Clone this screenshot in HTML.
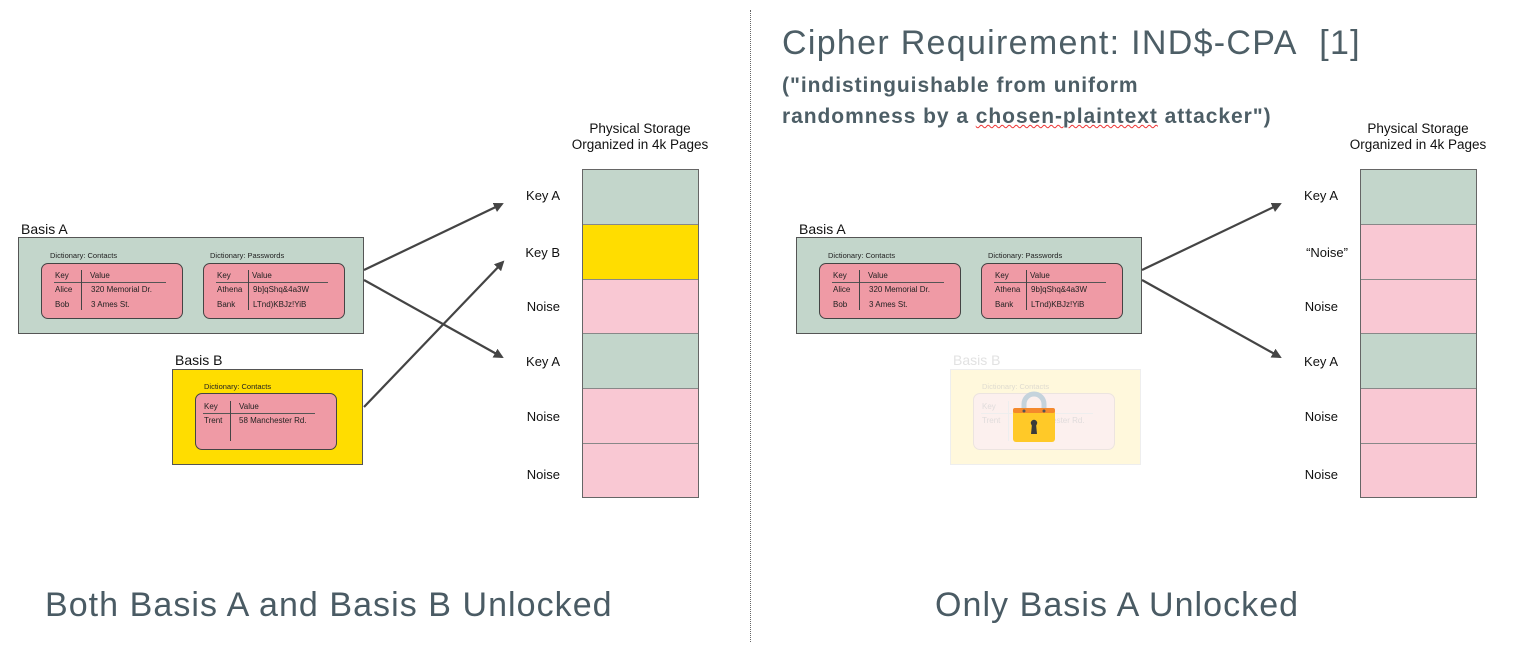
<!DOCTYPE html>
<html><head><meta charset="utf-8"><style>
body{margin:0;width:1515px;height:646px;background:#fff;position:relative;overflow:hidden;font-family:"Liberation Sans",sans-serif;}
.a{position:absolute;white-space:nowrap;}
.lbl{font-size:14px;color:#111;}
.basis{position:absolute;border:1px solid #555;box-sizing:border-box;}
.dl{position:absolute;font-size:7.5px;color:#222;white-space:nowrap;}
.ib{position:absolute;background:#ef9aa5;border:1px solid #444;border-radius:7px;box-sizing:border-box;font-size:8px;color:#222;}
.ib span{position:absolute;white-space:nowrap;}
.hl{position:absolute;height:1px;background:#555;}
.vl{position:absolute;width:1px;background:#444;}
.cell{position:absolute;left:0;width:100%;border-bottom:1px solid #888;box-sizing:border-box;}
.sl{position:absolute;font-size:13px;color:#111;text-align:right;width:80px;}
.big{position:absolute;font-size:34px;color:#4a5b64;white-space:nowrap;letter-spacing:1.05px;}
</style></head><body>

<div class="a" style="left:750px;top:10px;height:632px;border-left:1.5px dotted #666;"></div>

<!-- LEFT -->
<div class="a lbl" style="left:21px;top:221px;">Basis A</div>
<div class="basis" style="left:18px;top:237px;width:346px;height:97px;background:#c3d6cb;"></div>
<div class="dl" style="left:50px;top:251px;">Dictionary: Contacts</div>
<div class="dl" style="left:210px;top:251px;">Dictionary: Passwords</div>
<div class="ib" style="left:41px;top:263px;width:142px;height:56px;">
 <span style="left:13px;top:7px;">Key</span><span style="left:48px;top:7px;">Value</span>
 <div class="hl" style="left:12px;top:18px;width:112px;"></div><div class="vl" style="left:39px;top:6px;height:40px;"></div>
 <span style="left:13px;top:21px;">Alice</span><span style="left:49px;top:21px;">320 Memorial Dr.</span>
 <span style="left:13px;top:36px;">Bob</span><span style="left:49px;top:36px;">3 Ames St.</span>
</div>
<div class="ib" style="left:203px;top:263px;width:142px;height:56px;">
 <span style="left:13px;top:7px;">Key</span><span style="left:48px;top:7px;">Value</span>
 <div class="hl" style="left:12px;top:18px;width:112px;"></div><div class="vl" style="left:44px;top:6px;height:40px;"></div>
 <span style="left:13px;top:21px;">Athena</span><span style="left:49px;top:21px;">9b]qShq&amp;4a3W</span>
 <span style="left:13px;top:36px;">Bank</span><span style="left:49px;top:36px;">LTnd)KBJz!YiB</span>
</div>
<div class="a lbl" style="left:175px;top:352px;">Basis B</div>
<div class="basis" style="left:172px;top:369px;width:191px;height:96px;background:#ffdd00;"></div>
<div class="dl" style="left:204px;top:382px;">Dictionary: Contacts</div>
<div class="ib" style="left:195px;top:393px;width:142px;height:57px;">
 <span style="left:8px;top:8px;">Key</span><span style="left:43px;top:8px;">Value</span>
 <div class="hl" style="left:7px;top:19px;width:112px;"></div><div class="vl" style="left:34px;top:7px;height:40px;"></div>
 <span style="left:8px;top:22px;">Trent</span><span style="left:43px;top:22px;">58 Manchester Rd.</span>
</div>

<div class="a" style="left:540px;top:121px;width:200px;text-align:center;font-size:13.5px;line-height:16px;color:#111;">Physical Storage<br>Organized in 4k Pages</div>
<div class="a" style="left:582px;top:169px;width:117px;height:329px;border:1px solid #666;box-sizing:border-box;">
 <div class="cell" style="top:0;height:55px;background:#c3d6cb;"></div>
 <div class="cell" style="top:55px;height:55px;background:#ffdd00;"></div>
 <div class="cell" style="top:110px;height:54px;background:#f9c8d3;"></div>
 <div class="cell" style="top:164px;height:55px;background:#c3d6cb;"></div>
 <div class="cell" style="top:219px;height:55px;background:#f9c8d3;"></div>
 <div class="cell" style="top:274px;height:53px;background:#f9c8d3;border:none;"></div>
</div>
<div class="sl" style="left:480px;top:188px;">Key A</div>
<div class="sl" style="left:480px;top:245px;">Key B</div>
<div class="sl" style="left:480px;top:299px;">Noise</div>
<div class="sl" style="left:480px;top:354px;">Key A</div>
<div class="sl" style="left:480px;top:409px;">Noise</div>
<div class="sl" style="left:480px;top:467px;">Noise</div>

<!-- RIGHT -->
<div class="a lbl" style="left:799px;top:221px;">Basis A</div>
<div class="basis" style="left:796px;top:237px;width:346px;height:97px;background:#c3d6cb;"></div>
<div class="dl" style="left:828px;top:251px;">Dictionary: Contacts</div>
<div class="dl" style="left:988px;top:251px;">Dictionary: Passwords</div>
<div class="ib" style="left:819px;top:263px;width:142px;height:56px;">
 <span style="left:13px;top:7px;">Key</span><span style="left:48px;top:7px;">Value</span>
 <div class="hl" style="left:12px;top:18px;width:112px;"></div><div class="vl" style="left:39px;top:6px;height:40px;"></div>
 <span style="left:13px;top:21px;">Alice</span><span style="left:49px;top:21px;">320 Memorial Dr.</span>
 <span style="left:13px;top:36px;">Bob</span><span style="left:49px;top:36px;">3 Ames St.</span>
</div>
<div class="ib" style="left:981px;top:263px;width:142px;height:56px;">
 <span style="left:13px;top:7px;">Key</span><span style="left:48px;top:7px;">Value</span>
 <div class="hl" style="left:12px;top:18px;width:112px;"></div><div class="vl" style="left:44px;top:6px;height:40px;"></div>
 <span style="left:13px;top:21px;">Athena</span><span style="left:49px;top:21px;">9b]qShq&amp;4a3W</span>
 <span style="left:13px;top:36px;">Bank</span><span style="left:49px;top:36px;">LTnd)KBJz!YiB</span>
</div>
<div class="a" style="left:953px;top:352px;font-size:14px;color:#e2e2e2;">Basis B</div>
<div class="a" style="left:950px;top:369px;width:191px;height:96px;background:#fff8dc;border:1px solid #eeeeee;box-sizing:border-box;"></div>
<div class="dl" style="left:982px;top:382px;color:#e0dcd0;">Dictionary: Contacts</div>
<div class="a" style="left:973px;top:393px;width:142px;height:57px;background:#fcf0ee;border:1px solid #ece4e0;border-radius:7px;box-sizing:border-box;font-size:8px;color:#e0dcdc;">
 <span style="position:absolute;left:8px;top:8px;">Key</span>
 <div class="hl" style="left:7px;top:19px;width:112px;background:#eee;"></div><div class="vl" style="left:34px;top:7px;height:40px;background:#eee;"></div>
 <span style="position:absolute;left:8px;top:22px;">Trent</span><span style="position:absolute;left:43px;top:22px;">58 Manchester Rd.</span>
</div>
<svg class="a" style="left:1010px;top:388px;" width="48" height="56" viewBox="0 0 48 56">
 <path d="M14 24 V16 A10 10 0 0 1 34 16 V24" fill="none" stroke="#c5d3dc" stroke-width="5"/>
 <rect x="3" y="20" width="42" height="34" rx="3" fill="#ffc928"/>
 <rect x="3" y="20" width="42" height="5" rx="2" fill="#f4892c"/>
 <circle cx="14" cy="23" r="1.5" fill="#555"/><circle cx="34" cy="23" r="1.5" fill="#555"/>
 <circle cx="24" cy="35" r="3.2" fill="#3a3a3a"/><path d="M22 36 L21 46 H27 L26 36Z" fill="#3a3a3a"/>
</svg>

<div class="a" style="left:1318px;top:121px;width:200px;text-align:center;font-size:13.5px;line-height:16px;color:#111;">Physical Storage<br>Organized in 4k Pages</div>
<div class="a" style="left:1360px;top:169px;width:117px;height:329px;border:1px solid #666;box-sizing:border-box;">
 <div class="cell" style="top:0;height:55px;background:#c3d6cb;"></div>
 <div class="cell" style="top:55px;height:55px;background:#f9c8d3;"></div>
 <div class="cell" style="top:110px;height:54px;background:#f9c8d3;"></div>
 <div class="cell" style="top:164px;height:55px;background:#c3d6cb;"></div>
 <div class="cell" style="top:219px;height:55px;background:#f9c8d3;"></div>
 <div class="cell" style="top:274px;height:53px;background:#f9c8d3;border:none;"></div>
</div>
<div class="sl" style="left:1258px;top:188px;">Key A</div>
<div class="sl" style="left:1268px;top:245px;">“Noise”</div>
<div class="sl" style="left:1258px;top:299px;">Noise</div>
<div class="sl" style="left:1258px;top:354px;">Key A</div>
<div class="sl" style="left:1258px;top:409px;">Noise</div>
<div class="sl" style="left:1258px;top:467px;">Noise</div>

<svg class="a" style="left:0;top:0;" width="1515" height="646">
 <defs><marker id="ah" markerWidth="10" markerHeight="10" refX="8" refY="5" orient="auto" markerUnits="userSpaceOnUse"><path d="M0 0 L10 5 L0 10 Z" fill="#444"/></marker></defs>
 <g stroke="#444" stroke-width="2.2" fill="none" marker-end="url(#ah)">
  <line x1="364" y1="270" x2="502" y2="204"/>
  <line x1="364" y1="280" x2="502" y2="357"/>
  <line x1="364" y1="407" x2="503" y2="262"/>
  <line x1="1142" y1="270" x2="1280" y2="204"/>
  <line x1="1142" y1="280" x2="1280" y2="357"/>
 </g>
</svg>

<div class="a" style="left:782px;top:24px;font-size:34px;color:#4d5e66;letter-spacing:1.3px;">Cipher Requirement: IND$-CPA&nbsp; [1]</div>
<div class="a" style="left:782px;top:70px;font-size:21px;line-height:31px;color:#4d5e66;font-weight:bold;letter-spacing:0.95px;">("indistinguishable from uniform<br>randomness by a <span style="text-decoration:underline wavy #e33;text-decoration-thickness:1px;">chosen-plaintext</span> attacker")</div>

<div class="big" style="left:45px;top:586px;">Both Basis A and Basis B Unlocked</div>
<div class="big" style="left:935px;top:586px;">Only Basis A Unlocked</div>
</body></html>
